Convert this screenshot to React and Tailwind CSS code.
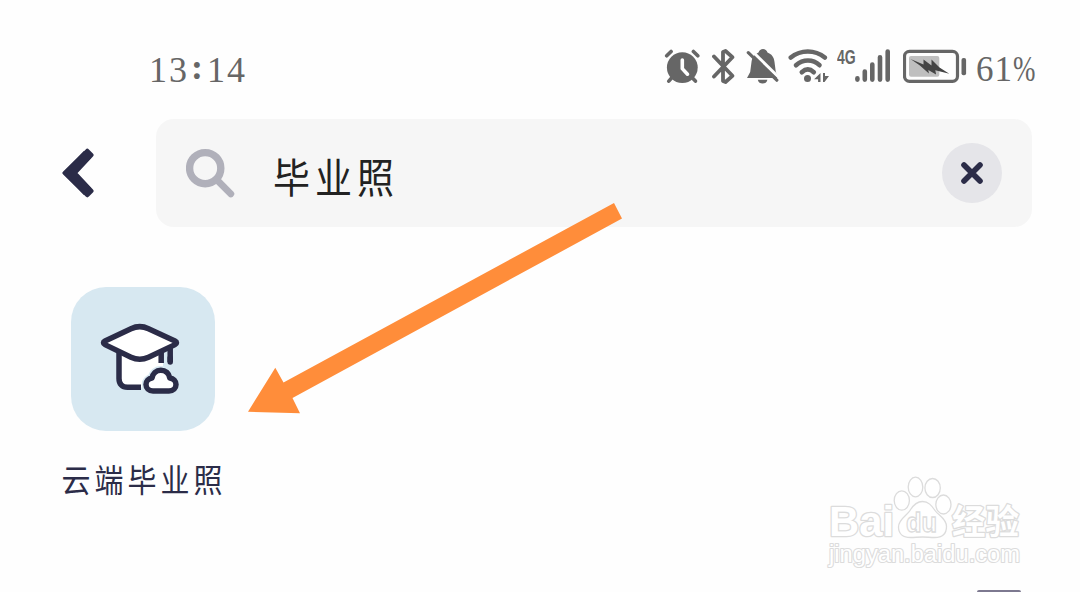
import React from "react";

const AlarmIcon = () => (
    <svg className="w-[36px] h-[36px]" viewBox="664 48 36 36" fill="none">
        <g stroke="#666" strokeWidth="3.6" strokeLinecap="round">
            <path d="M666.7 55.8l4.4-4.4M697.8 55.8l-4.4-4.4M672 77.5l-3.2 3.6M692 77.5l3.4 3.6" />
        </g>
        <circle cx="682.3" cy="67.6" r="15.4" fill="#666" />
        <path d="M682.3 60v8.600l5.200 5.600" stroke="#fff" strokeWidth="3.600" strokeLinecap="round" />
    </svg>
);

const BluetoothIcon = () => (
    <svg className="w-[24px] h-[36px]" viewBox="711 48 24 36" fill="none">
        <path
            d="M714 56.500l18.400 19.300-6.900 6.200-2.500-1V52l2.500-1 6.900 6.200L714 76.500"
            stroke="#666"
            strokeWidth="3.800"
            strokeLinecap="round"
            strokeLinejoin="round"
        />
    </svg>
);

const MutedBellIcon = () => (
    <svg className="w-[34px] h-[36px]" viewBox="746 48 34 36" fill="none">
        <path
            d="M747 78l3.200-6L751.500 62c.6-5 3.500-8 7-9.500.7-2.200 2.400-3.500 4.500-3.500s3.800 1.300 4.500 3.500c4 1.500 6.500 4.500 7 9.500l1.300 10 3.200 6z"
            fill="#666"
        />
        <path d="M757.800 79.800h9.600c-.6 2.800-2.400 3.800-4.800 3.800s-4.200-1-4.800-3.800z" fill="#666" />
        <path d="M750 49l30 29.500" stroke="#fefefe" strokeWidth="3" />
        <path d="M748.300 52.700l28.500 27.500" stroke="#666" strokeWidth="3.200" strokeLinecap="round" />
    </svg>
);

const WifiIcon = () => (
    <svg className="w-[41px] h-[36px]" viewBox="788 48 41 36" fill="none">
        <g stroke="#666" strokeWidth="4.600" strokeLinecap="round">
            <path d="M790.800 57.500c10-8 24-8 34 0" />
            <path d="M796 65.200c7-6.300 17-6.300 23.500 0" />
            <path d="M801.800 72.200c3.800-3.500 8.200-3.500 12 0" />
        </g>
        <circle cx="807.500" cy="78.600" r="3.500" fill="#666" />
        <path d="M820.500 73v9h-2.400v-2.800h-4zM823 73h2v3h4l-4.500 6H823z" fill="#666" />
    </svg>
);

const SignalIcon = () => (
    <svg className="w-[36px] h-[36px]" viewBox="855 48 36 36" stroke="#666" strokeWidth="4.600" strokeLinecap="round">
        <path d="M857.400 78.200v1.400M864.800 71.500v8.100M872.300 64.500v15.100M880 57.300v22.300M887.700 51.500v28.100" />
    </svg>
);

const BatteryIcon = () => (
    <svg className="w-[64px] h-[36px]" viewBox="903 48 64 36" fill="none">
        <rect x="904.500" y="51.300" width="53" height="30" rx="5" stroke="#666" strokeWidth="3.200" />
        <rect x="909" y="56" width="30.300" height="20.700" rx="2" fill="#bfbfbf" />
        <rect x="961.500" y="58" width="4.600" height="17.300" rx="2" fill="#666" />
        <path
            d="M910.500 59l13 5.500V59.500l8 6V59.500l8 8 9.800 6.300-14-3.500.8 4.200-7.800-4.500.6 3.500-9-8z"
            fill="#444"
        />
    </svg>
);

const StatusBar = () => (
    <div className="flex h-9 items-center text-[#666] font-['Liberation_Serif',serif]">
        <div className="w-[515px] pt-2 text-[36px] leading-9 tracking-[2px] whitespace-nowrap">
            13<span className="inline-block w-[18px] pl-[2px] -translate-y-[3px] font-bold">:</span>14
        </div>
        <AlarmIcon />
        <div className="ml-[11px] flex">
            <BluetoothIcon />
        </div>
        <div className="ml-[11px] flex">
            <MutedBellIcon />
        </div>
        <div className="ml-2 flex">
            <WifiIcon />
        </div>
        <div className="ml-[8px] w-[18px] self-start text-[20px] leading-[18px] font-bold">
            <span className="inline-block origin-left scale-x-[0.7] font-['Liberation_Sans',sans-serif]">4G</span>
        </div>
        <SignalIcon />
        <div className="ml-3 flex">
            <BatteryIcon />
        </div>
        <div className="ml-[9px] flex pt-2 text-[35px] leading-9">
            <span className="tracking-[1px]">61</span>
            <span className="inline-block origin-left scale-x-[0.77]">%</span>
        </div>
    </div>
);

const SearchBar = () => (
    <div className="flex items-center">
        <svg className="h-[50px] w-[32px]" viewBox="62 148 32 50">
            <path
                d="M87.300 151l4 4L74.500 173l16.800 18-4 4L64.800 173z"
                fill="#2b2c48"
                stroke="#2b2c48"
                strokeWidth="4.500"
                strokeLinejoin="round"
            />
            <path d="M87.500 154.500L69.500 173l18 18.500" fill="none" stroke="#2b2c48" strokeWidth="10" />
        </svg>
        <div className="ml-[62px] flex h-[108px] w-[876px] items-center rounded-[18px] bg-[#f6f6f6] pr-[30px] pl-[30px]">
            <svg className="h-[50px] w-[50px]" viewBox="186 148 50 50" fill="none" stroke="#b0b0ba">
                <circle cx="205.200" cy="168.200" r="15.600" strokeWidth="7.400" />
                <path d="M216.500 179.500l14.300 14.300" strokeWidth="6.800" strokeLinecap="round" />
            </svg>
            <div className="ml-[37px] flex-1 pt-1 text-[37px] leading-none tracking-[5px] text-[#222] font-['Noto_Sans_CJK_SC',sans-serif]">
                <span className="inline-block origin-left scale-y-110">毕业照</span>
            </div>
            <button className="flex h-[60px] w-[60px] items-center justify-center rounded-full bg-[#e5e5e9]">
                <svg className="h-6 w-6" viewBox="0 0 24 24" stroke="#2b2c48" strokeWidth="5.600" strokeLinecap="round">
                    <path d="M4 4l16 16M20 4L4 20" />
                </svg>
            </button>
        </div>
    </div>
);

const GraduationIcon = () => (
    <svg className="h-[74px] w-[80px]" viewBox="100 322 80 74" stroke="#2b2c48" strokeWidth="5.500" strokeLinejoin="round" fill="none">
        <path d="M119 350v29c0 5 3 8.500 8 8.500h16l20-16V350z" fill="#fff" stroke="none" />
        <path d="M119 350v28.500c0 5.500 3 8.800 8.500 8.800H141" />
        <path d="M161.200 352v11M170.200 348v14" />
        <path d="M170.200 358v4" strokeLinecap="round" />
        <path
            d="M105 341l26-12.300c5.500-2.600 12-2.600 17.500 0L175 341c2 1 2 2.600 0 3.600l-26.500 12.600c-5.500 2.600-12 2.600-17.500 0L105 344.600c-2-1-2-2.600 0-3.600z"
            fill="#fff"
        />
        <path
            d="M153 391c-4.300 0-7-2.900-7-6.500s2.500-6 6-6.500c.8-4.500 4-7.800 8.800-7.800s8.200 3.300 9 7.800c3.700.5 6.200 2.900 6.200 6.500s-2.700 6.500-7 6.500z"
            fill="#fff"
            stroke="#d7e8f1"
            strokeWidth="8.500"
        />
        <path
            d="M153 391c-4.300 0-7-2.900-7-6.500s2.500-6 6-6.500c.8-4.500 4-7.800 8.800-7.800s8.200 3.300 9 7.800c3.700.5 6.200 2.900 6.200 6.500s-2.700 6.500-7 6.500z"
            fill="#fff"
            strokeWidth="5.500"
        />
    </svg>
);

const ResultItem = () => (
    <div className="flex w-[164px] flex-col items-center">
        <div className="flex h-36 w-36 items-center justify-center rounded-[35px] bg-[#d7e8f1] pr-[6px]">
            <GraduationIcon />
        </div>
        <div className="mt-[31px] ml-[2px] scale-y-110 text-[29px] leading-[32px] tracking-[4px] whitespace-nowrap text-[#2b2c48] font-['Noto_Sans_CJK_SC',sans-serif]">
            云端毕业照
        </div>
    </div>
);

const PointerArrow = () => (
    <svg className="pointer-events-none absolute top-[190px] left-[240px] h-[230px] w-[390px]" viewBox="240 190 390 230">
        <path d="M614 203L622 218.500 292.500 398 300 413.300 248 411.700 275.300 367.800 283.500 382.500z" fill="#ff8d3a" />
    </svg>
);

const Watermark = () => (
    <svg
        className="pointer-events-none absolute top-[470px] left-[820px] h-[102px] w-[210px]"
        viewBox="820 470 210 102"
        fill="#fff"
        stroke="#dcdcdc"
        strokeWidth="1.300"
    >
        <g fontFamily="'Liberation Sans', sans-serif" fontWeight="bold" paintOrder="stroke" strokeLinejoin="round">
            <text x="829" y="536" fontSize="43" textLength="65" lengthAdjust="spacingAndGlyphs" strokeWidth="2.600">Bai</text>
            <text x="829" y="562" fontSize="23" fontWeight="normal" textLength="191" lengthAdjust="spacingAndGlyphs" strokeWidth="2.200">
                jingyan.baidu.com
            </text>
            <text x="952" y="534" fontSize="34" fontFamily="'Noto Sans CJK SC', sans-serif" textLength="67" lengthAdjust="spacingAndGlyphs" strokeWidth="2.600">
                经验
            </text>
        </g>
        <ellipse cx="901.800" cy="500.500" rx="7.600" ry="9.700" />
        <ellipse cx="915.500" cy="487" rx="7.300" ry="9.800" />
        <ellipse cx="932.600" cy="488" rx="7.700" ry="9.500" />
        <ellipse cx="943.400" cy="504.500" rx="7.600" ry="9.500" />
        <path d="M922.500 501.500c-6 0-9.500 4-12.500 9s-11.500 8.500-11.500 16.500c0 7 5 10.500 12 10.500 4 0 8-.5 12-.5s8 .5 12 .5c8 0 12-4 12-11 0-8-8-11-11.500-16s-6.500-9-12.500-9z" />
        <text x="906" y="532" fontSize="28" fontFamily="'Liberation Sans', sans-serif" fontWeight="bold" textLength="31" lengthAdjust="spacingAndGlyphs">
            du
        </text>
    </svg>
);

const App = () => {
    return (
        <div className="relative flex h-[592px] w-[1080px] flex-col overflow-hidden bg-[#fefefe]">
            <div className="pt-12 pl-[149px]">
                <StatusBar />
            </div>
            <div className="mt-[35px] pl-[62px]">
                <SearchBar />
            </div>
            <div className="mt-[60px] pl-[61px]">
                <ResultItem />
            </div>
            <div className="mt-auto ml-[977px] h-[2px] w-[44px] rounded-t-full bg-[#7d7990]" />
            <PointerArrow />
            <Watermark />
        </div>
    );
};

export default App;
